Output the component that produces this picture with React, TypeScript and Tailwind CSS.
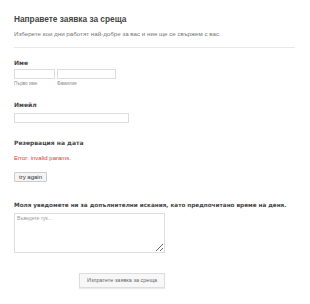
export default function App() {
  return (
    <div className="w-[310px] h-[304px] bg-white overflow-hidden px-[14px] font-['Liberation_Sans',Arial,sans-serif]">
      <div className="pt-[14px]">
        <h1 className="text-[8.3px] leading-[10px] font-bold text-[#444]">Направете заявка за среща</h1>
        <p className="mt-[6px] text-[6.2px] leading-[8px] text-[#777]">
          Изберете кои дни работят най-добре за вас и ние ще се свържем с вас.
        </p>
      </div>
      <div className="mt-[9px] mr-[1px] h-px bg-[#e8e8e8]" />

      <div className="mt-[11px] font-['DejaVu_Sans',Verdana,sans-serif] text-[6px] leading-[7px] font-bold text-[#444]">Име</div>
      <div className="mt-[3px] flex gap-[2px]">
        <div className="flex flex-col">
          <input className="w-[41px] h-[10px] border border-[#ddd] bg-white" />
          <span className="mt-[2px] text-[4.6px] leading-[5px] text-[#888]">Първо име</span>
        </div>
        <div className="flex flex-col">
          <input className="w-[59px] h-[10px] border border-[#ddd] bg-white" />
          <span className="mt-[2px] text-[4.6px] leading-[5px] text-[#888]">Фамилия</span>
        </div>
      </div>

      <div className="mt-[15px] font-['DejaVu_Sans',Verdana,sans-serif] text-[6px] leading-[7px] font-bold text-[#444]">Имейл</div>
      <input className="mt-[5px] block w-[115px] h-[10px] border border-[#ddd] bg-white" />

      <div className="mt-[16px] font-['DejaVu_Sans',Verdana,sans-serif] text-[6px] leading-[7px] font-bold text-[#444]">Резервация на дата</div>
      <div className="mt-[9px] text-[6px] leading-[7px] text-[#e53935]">Error: invalid params.</div>
      <button className="mt-[10px] block w-[33px] h-[10px] border border-[#ccc] rounded-[1px] bg-[#f4f4f4] text-[6px] leading-[8px] text-[#333]">
        try again
      </button>

      <div className="mt-[20px] font-['DejaVu_Sans',Verdana,sans-serif] text-[5.7px] leading-[7px] font-bold text-[#444] whitespace-nowrap">
        Моля уведомете ни за допълнителни искания, като предпочитано време на деня.
      </div>
      <textarea
        placeholder="Въведете тук..."
        className="mt-[4px] block w-[151px] h-[40px] border border-[#ddd] bg-white px-[2px] py-[1px] text-[5px] leading-[7px] text-[#333] placeholder:text-[#999] resize"
      />

      <div className="mt-[20px] flex">
        <button className="ml-[65px] w-[86px] h-[15px] border border-[#ddd] bg-[#f7f7f7] text-[5.5px] text-[#666] shadow-[0_1px_1px_rgba(0,0,0,0.08)]">
          Изпратете заявка за среща
        </button>
      </div>
    </div>
  );
}
